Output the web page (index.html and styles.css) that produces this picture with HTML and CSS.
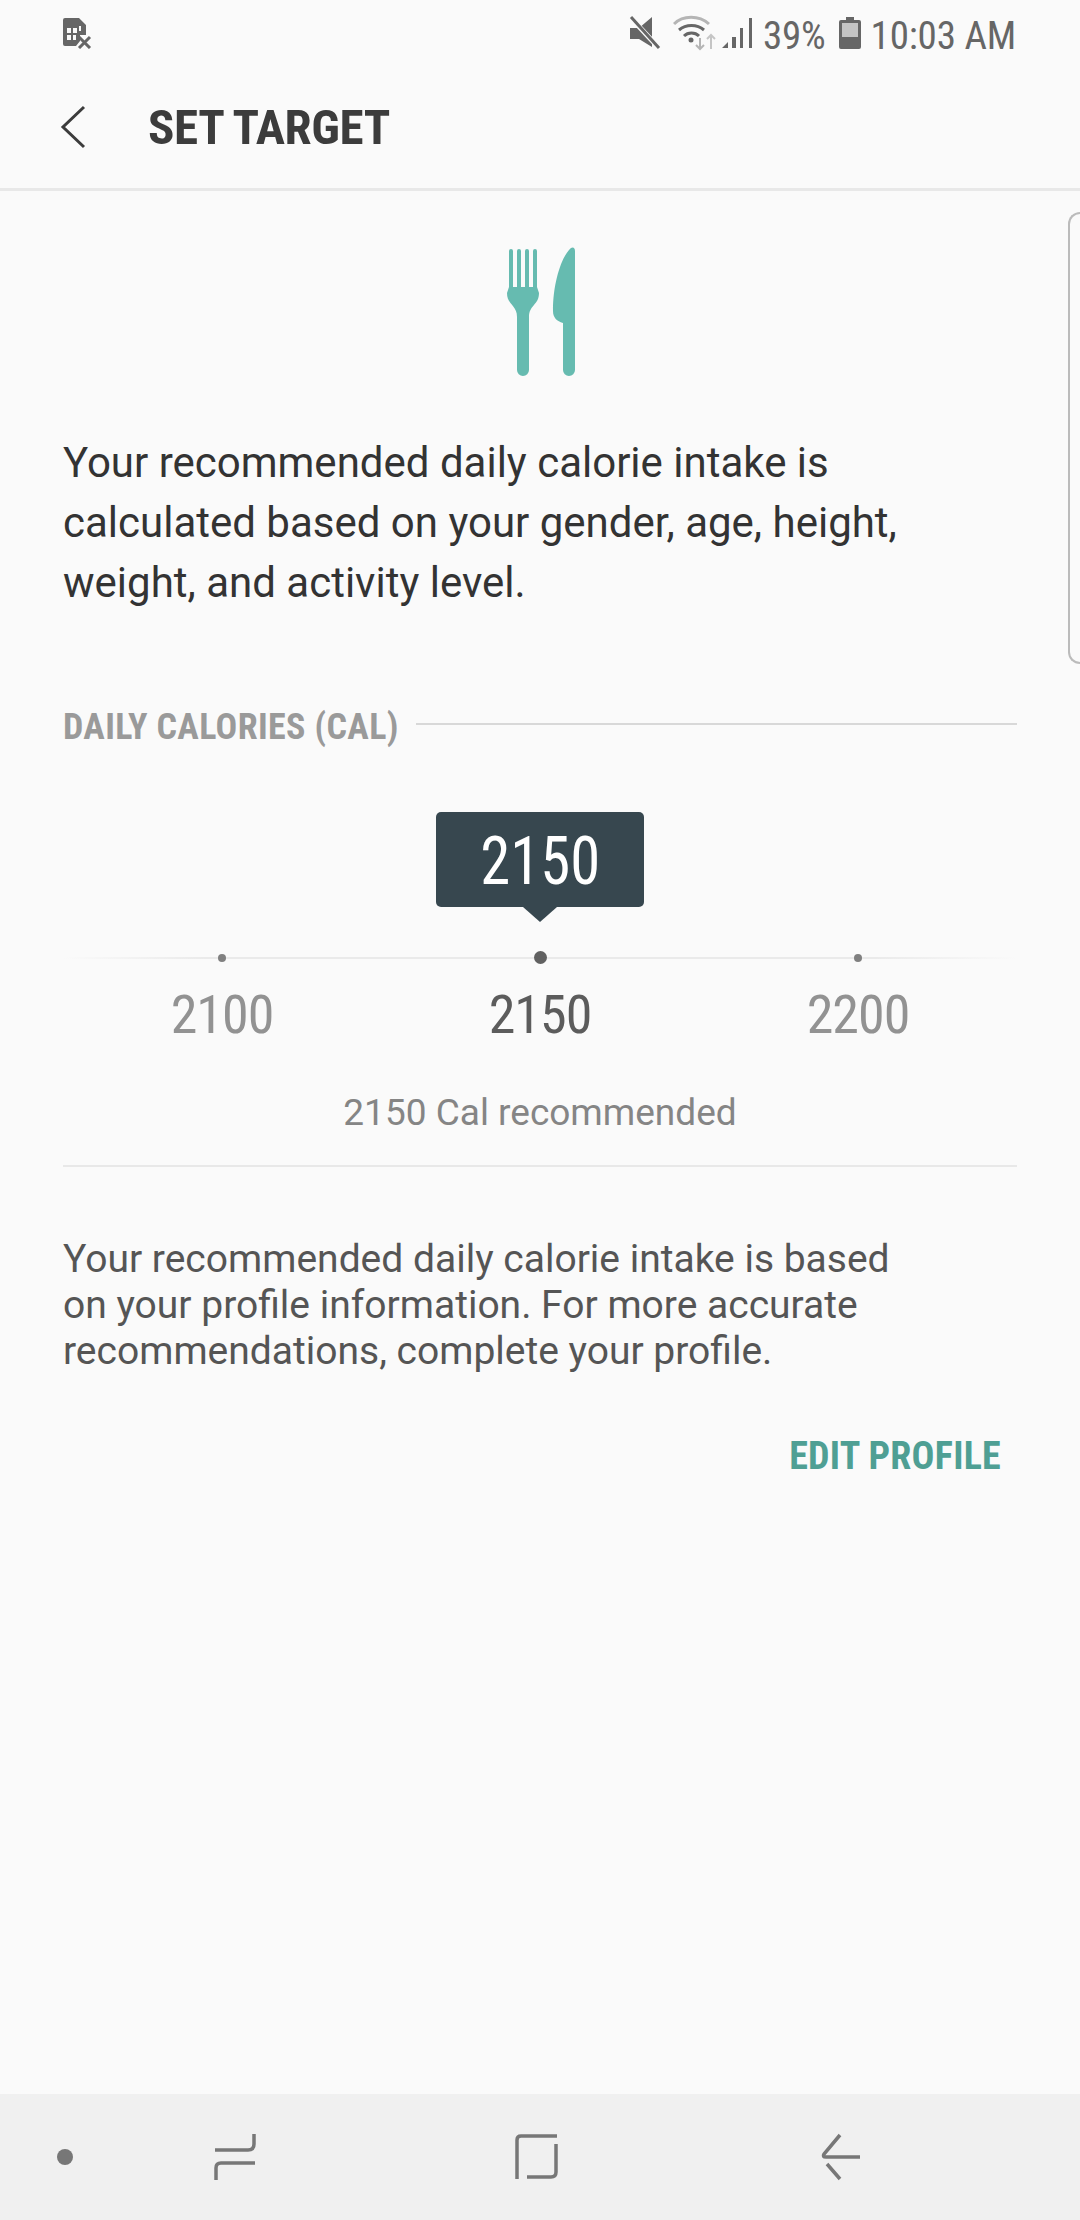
FILE: index.html
```html
<!DOCTYPE html>
<html lang="en">
<head>
    <meta charset="UTF-8">
    <title>Set Target</title>
    <link rel="stylesheet" href="styles.css">
</head>
<body>
    <div class="screen">
        <div class="status">
            <svg class="sim" width="30" height="32" viewBox="0 0 30 32">
                <path d="M3 1h14l7 7v10h-6v6l-4 5H3a2 2 0 0 1-2-2V3a2 2 0 0 1 2-2z" fill="#666"/>
                <path d="M5 11h4v5H5zM11 11h4v5h-4zM5 18h4v5H5zM11 18h3v5h-3zM17 9h2v5h-2z" fill="#fafafa"/>
                <path d="M17 20l11 11M28 20L17 31" stroke="#666" stroke-width="3" fill="none"/>
            </svg>
            <div class="status-right">
                <svg class="mute" width="32" height="34" viewBox="0 0 32 34">
                    <path d="M1 12h9L23 1v30L10 23H1z" fill="#666"/>
                    <path d="M2 2l28 30" stroke="#fafafa" stroke-width="5"/>
                    <path d="M2 1l28 31" stroke="#666" stroke-width="3"/>
                </svg>
                <svg class="wifi" width="44" height="36" viewBox="0 0 44 36">
                    <path d="M1 9c9-9 25-9 35 0" stroke="#b5b5b5" stroke-width="3" fill="none"/>
                    <path d="M6 15c7-6 18-6 25 0M11 21c4-4 11-4 15 0" stroke="#666" stroke-width="3" fill="none"/>
                    <circle cx="18" cy="25" r="2.5" fill="#666"/>
                    <path d="M27 23v11M23 30l4 4 4-4" stroke="#b5b5b5" stroke-width="2" fill="none"/>
                    <path d="M38 34V20M34 24l4-4 4 4" stroke="#c5c5c5" stroke-width="2" fill="none"/>
                </svg>
                <svg class="signal" width="32" height="32" viewBox="0 0 32 32">
                    <path d="M1 31l6-6v6zM11 31V20h4v11zM19 31V11h3v20zM28 31V1h3v30z" fill="#666"/>
                </svg>
                <span class="status-text pct">39%</span>
                <svg class="battery" width="22" height="32" viewBox="0 0 22 32">
                    <path d="M7 0h8v3h5a2 2 0 0 1 2 2v25a2 2 0 0 1-2 2H2a2 2 0 0 1-2-2V5a2 2 0 0 1 2-2h5z" fill="#666"/>
                    <rect x="3" y="6" width="16" height="14" fill="#c4c4c4"/>
                </svg>
                <span class="status-text">10:03 AM</span>
            </div>
        </div>

        <div class="appbar">
            <svg class="back" width="26" height="44" viewBox="0 0 26 44">
                <path d="M24 2L3 22l21 20" stroke="#3c3c3c" stroke-width="3" fill="none"/>
            </svg>
            <h1 class="title">SET TARGET</h1>
        </div>

        <div class="content">
            <svg class="food-icon" width="68" height="132" viewBox="0 0 68 132">
                <path d="M0 48L2 42V6a2 2 0 0 1 4 0V42H10V6a2 2 0 0 1 4 0V42H18V6a2 2 0 0 1 4 0V42H26V6a2 2 0 0 1 4 0V42L32 48C32 60 22 60 22 72V125a6 6 0 0 1-12 0V72C10 60 0 60 0 48z" fill="#66bbb0"/>
                <path d="M68 6V125a6 6 0 0 1-12 0V78C50 76 46 73 46 66C46 38 54 14 62 5C65 1 68 2 68 6z" fill="#66bbb0"/>
            </svg>
            <p class="intro">Your recommended daily calorie intake is calculated based on your gender, age, height, weight, and activity level.</p>

            <div class="section-head">
                <span class="section-label">DAILY CALORIES (CAL)</span>
                <span class="section-line"></span>
            </div>

            <div class="picker">
                <div class="bubble"><span class="bubble-num">2150</span></div>
                <div class="track">
                    <span class="tick"></span>
                    <span class="tick active"></span>
                    <span class="tick"></span>
                </div>
                <div class="values">
                    <span class="value">2100</span>
                    <span class="value active">2150</span>
                    <span class="value">2200</span>
                </div>
            </div>

            <p class="recommended">2150 Cal recommended</p>
            <p class="note">Your recommended daily calorie intake is based<br>on your profile information. For more accurate<br>recommendations, complete your profile.</p>
            <div class="actions"><span class="edit">EDIT PROFILE</span></div>
        </div>

        <div class="handle"></div>

        <div class="navbar">
            <svg class="nav-icons" width="1080" height="126" viewBox="0 2094 1080 126">
                <ellipse cx="65" cy="2157" rx="8" ry="8" fill="#777"/>
                <path d="M254 2134v10q0 6-6 6h-33M255 2163h-34q-5 0-5 5v12" stroke="#777" stroke-width="3.500" fill="none"/>
                <path d="M517 2179v-39q0-4 4-4h36M527 2177h24q5 0 5-5v-28" stroke="#777" stroke-width="3.500" fill="none"/>
                <path d="M840 2135l-16 19q-2 3 2 3h34M827 2164l13 15" stroke="#777" stroke-width="3.500" fill="none"/>
            </svg>
        </div>
    </div>
</body>
</html>
```

FILE: styles.css
```css
* {
    margin: 0;
    padding: 0;
    box-sizing: border-box;
}

body {
    background: #fafafa;
    font-family: 'Roboto', sans-serif;
}

.screen {
    position: relative;
    width: 1080px;
    height: 2220px;
    display: flex;
    flex-direction: column;
    overflow: hidden;
}

.status {
    height: 66px;
    padding: 0 64px 0 62px;
    display: flex;
    justify-content: space-between;
    align-items: center;
}

.status-right {
    display: flex;
    align-items: center;
}

.status-text {
    margin-top: 6px;
    font-size: 39px;
    font-stretch: condensed;
    letter-spacing: -0.2px;
    color: #666;
    white-space: nowrap;
}

.mute { margin-right: 12px; }
.wifi { margin-right: 4px; }
.pct { margin-left: 10px; }
.battery { margin: 0 10px 0 13px; }

.appbar {
    height: 125px;
    padding-left: 60px;
    display: flex;
    align-items: center;
    border-bottom: 3px solid #e8e8e8;
}

.back {
    margin-right: 62px;
}

.title {
    font-size: 49px;
    font-weight: 700;
    font-stretch: condensed;
    letter-spacing: -0.4px;
    color: #3c3c3c;
    white-space: nowrap;
}

.content {
    padding: 54px 63px 0;
    flex: 1;
    display: flex;
    flex-direction: column;
}

.food-icon {
    align-self: center;
    margin-left: 1px;
}

.intro {
    margin-top: 56px;
    max-width: 900px;
    font-size: 42px;
    line-height: 60px;
    color: #333;
}

.section-head {
    margin-top: 93px;
    display: flex;
    align-items: center;
    gap: 17px;
}

.section-label {
    font-size: 36px;
    font-weight: 700;
    font-stretch: condensed;
    letter-spacing: 0.35px;
    color: #9a9a9a;
    white-space: nowrap;
}

.section-line {
    flex: 1;
    height: 2px;
    margin-bottom: 7px;
    background: #d8d8d8;
}

.picker {
    margin-top: 64px;
    display: flex;
    flex-direction: column;
    align-items: center;
}

.bubble {
    position: relative;
    width: 208px;
    height: 95px;
    padding-top: 3px;
    background: #37474f;
    border-radius: 5px;
    display: flex;
    align-items: center;
    justify-content: center;
}

.bubble::after {
    content: "";
    position: absolute;
    left: 87px;
    top: 95px;
    border-left: 17px solid transparent;
    border-right: 17px solid transparent;
    border-top: 15px solid #37474f;
}

.bubble-num {
    font-size: 66px;
    font-stretch: condensed;
    color: #fff;
    transform: scaleX(0.92);
}

.track {
    margin-top: 44px;
    width: 100%;
    height: 13px;
    display: grid;
    grid-template-columns: repeat(3, 1fr);
    justify-items: center;
    align-items: center;
    background: linear-gradient(to right, #fafafa, #eaeaea 15%, #eaeaea 85%, #fafafa) center / 100% 2px no-repeat;
}

.tick {
    width: 8px;
    height: 8px;
    border-radius: 50%;
    background: #808080;
}

.tick.active {
    width: 13px;
    height: 13px;
    background: #616161;
}

.values {
    margin-top: 19px;
    width: 100%;
    display: grid;
    grid-template-columns: repeat(3, 1fr);
    justify-items: center;
}

.value {
    font-size: 54px;
    font-stretch: condensed;
    letter-spacing: -1px;
    color: #929292;
}

.value.active {
    color: #5c5c5c;
}

.recommended {
    margin-top: 45px;
    padding-bottom: 31px;
    border-bottom: 2px solid #e8e8e8;
    text-align: center;
    font-size: 37px;
    color: #858585;
}

.note {
    margin-top: 69px;
    font-size: 39px;
    line-height: 46px;
    color: #555;
}

.actions {
    margin-top: 60px;
    padding-right: 16px;
    display: flex;
    justify-content: flex-end;
}

.edit {
    font-size: 38px;
    font-weight: 700;
    font-stretch: condensed;
    letter-spacing: 0.25px;
    color: #4f9f94;
}

.handle {
    position: absolute;
    right: 0;
    top: 212px;
    width: 12px;
    height: 452px;
    border: 2px solid #bbb;
    border-right: none;
    border-radius: 14px 0 0 14px;
}

.navbar {
    height: 126px;
    background: #f0f0f0;
}

.nav-icons {
    display: block;
}
```
